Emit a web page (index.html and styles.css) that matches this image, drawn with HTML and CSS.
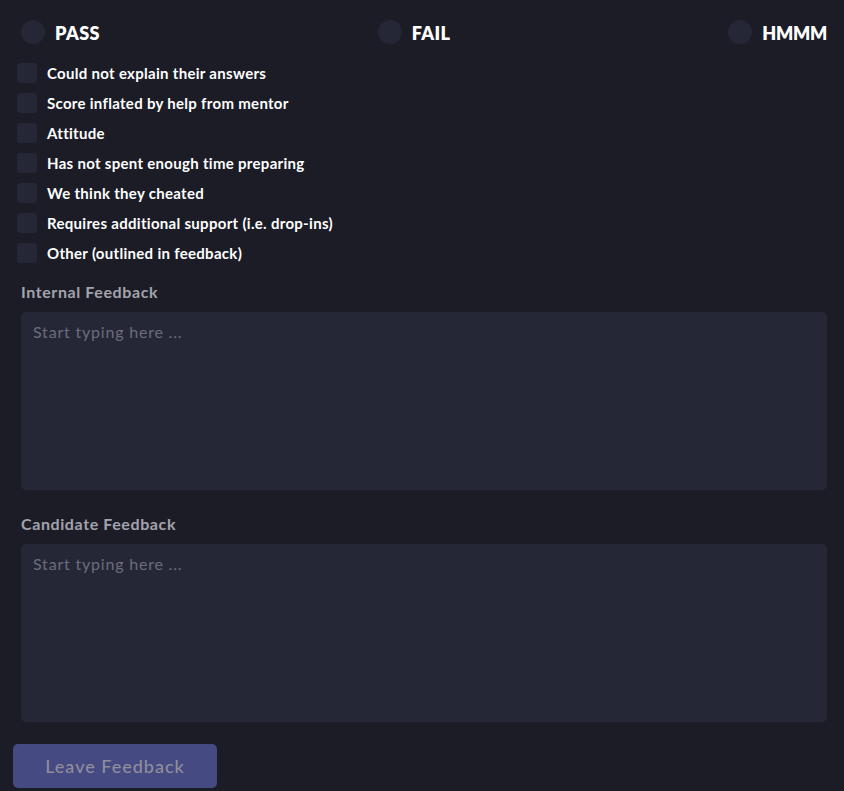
FILE: index.html
```html
<!DOCTYPE html>
<html>
<head>
<meta charset="utf-8">
<link rel="stylesheet" href="styles.css">
</head>
<body>
<div class="page">
  <div class="verdicts">
    <label class="verdict"><span class="radio"></span><span class="verdict-text">PASS</span></label>
    <label class="verdict"><span class="radio"></span><span class="verdict-text">FAIL</span></label>
    <label class="verdict"><span class="radio"></span><span class="verdict-text">HMMM</span></label>
  </div>
  <ul class="reasons">
    <li class="reason"><span class="box"></span>Could not explain their answers</li>
    <li class="reason"><span class="box"></span>Score inflated by help from mentor</li>
    <li class="reason"><span class="box"></span>Attitude</li>
    <li class="reason"><span class="box"></span>Has not spent enough time preparing</li>
    <li class="reason"><span class="box"></span>We think they cheated</li>
    <li class="reason"><span class="box"></span>Requires additional support (i.e. drop-ins)</li>
    <li class="reason"><span class="box"></span>Other (outlined in feedback)</li>
  </ul>
  <div class="field">
    <div class="field-label">Internal Feedback</div>
    <textarea class="field-input" placeholder="Start typing here ..."></textarea>
  </div>
  <div class="field field-second">
    <div class="field-label">Candidate Feedback</div>
    <textarea class="field-input" placeholder="Start typing here ..."></textarea>
  </div>
  <button class="submit">Leave Feedback</button>
</div>
</body>
</html>
```

FILE: styles.css
```css
html, body {
  margin: 0;
  padding: 0;
  background: #1b1c26;
  height: 100%;
}
body {
  font-family: Lato, "Noto Sans", sans-serif;
  color: #ffffff;
}
.page {
  display: flex;
  flex-direction: column;
  padding-top: 20px;
}
.verdicts {
  display: flex;
  justify-content: space-between;
  margin: 0 17px 0 21px;
  height: 24px;
}
.verdict {
  display: flex;
  align-items: center;
  gap: 10px;
}
.radio {
  width: 24px;
  height: 24px;
  border-radius: 50%;
  background: #252736;
}
.verdict-text {
  font-size: 18px;
  font-weight: 800;
  letter-spacing: 0.4px;
  line-height: 24px;
  padding-top: 2px;
}
.verdict:last-child .verdict-text {
  letter-spacing: -0.3px;
}
.reasons {
  list-style: none;
  margin: 14px 0 0 17px;
  padding: 0;
}
.reason {
  display: flex;
  align-items: center;
  height: 30px;
  font-size: 15px;
  font-weight: 700;
  letter-spacing: 0.3px;
  gap: 10px;
  line-height: 18px;
  padding-bottom: 1px;
  box-sizing: border-box;
}
.box {
  flex: none;
  width: 20px;
  height: 20px;
  border-radius: 3px;
  background: #252736;
  margin-top: 1px;
}
.field {
  margin: 14px 17px 0 21px;
  display: flex;
  flex-direction: column;
}
.field-second {
  margin-top: 24px;
}
.field-label {
  font-size: 16px;
  font-weight: 700;
  letter-spacing: 0.6px;
  color: #a3a3ad;
  line-height: 20px;
  margin-bottom: 10px;
}
.field-input {
  height: 178px;
  box-sizing: border-box;
  background: #252736;
  border: none;
  border-radius: 5px;
  padding: 10px 12px;
  font-family: Lato, "Noto Sans", sans-serif;
  font-size: 16px;
  letter-spacing: 0.8px;
  line-height: 20px;
  color: #ffffff;
  resize: none;
  outline: none;
}
.field-input::placeholder {
  color: #6b6d7c;
}
.submit {
  align-self: flex-start;
  margin: 22px 0 0 13px;
  width: 204px;
  height: 44px;
  border: none;
  border-radius: 5px;
  background: #464a82;
  color: #8e8e9c;
  font-family: Lato, "Noto Sans", sans-serif;
  font-size: 18px;
  letter-spacing: 1px;
  font-weight: 500;
  padding: 0;
}
```
